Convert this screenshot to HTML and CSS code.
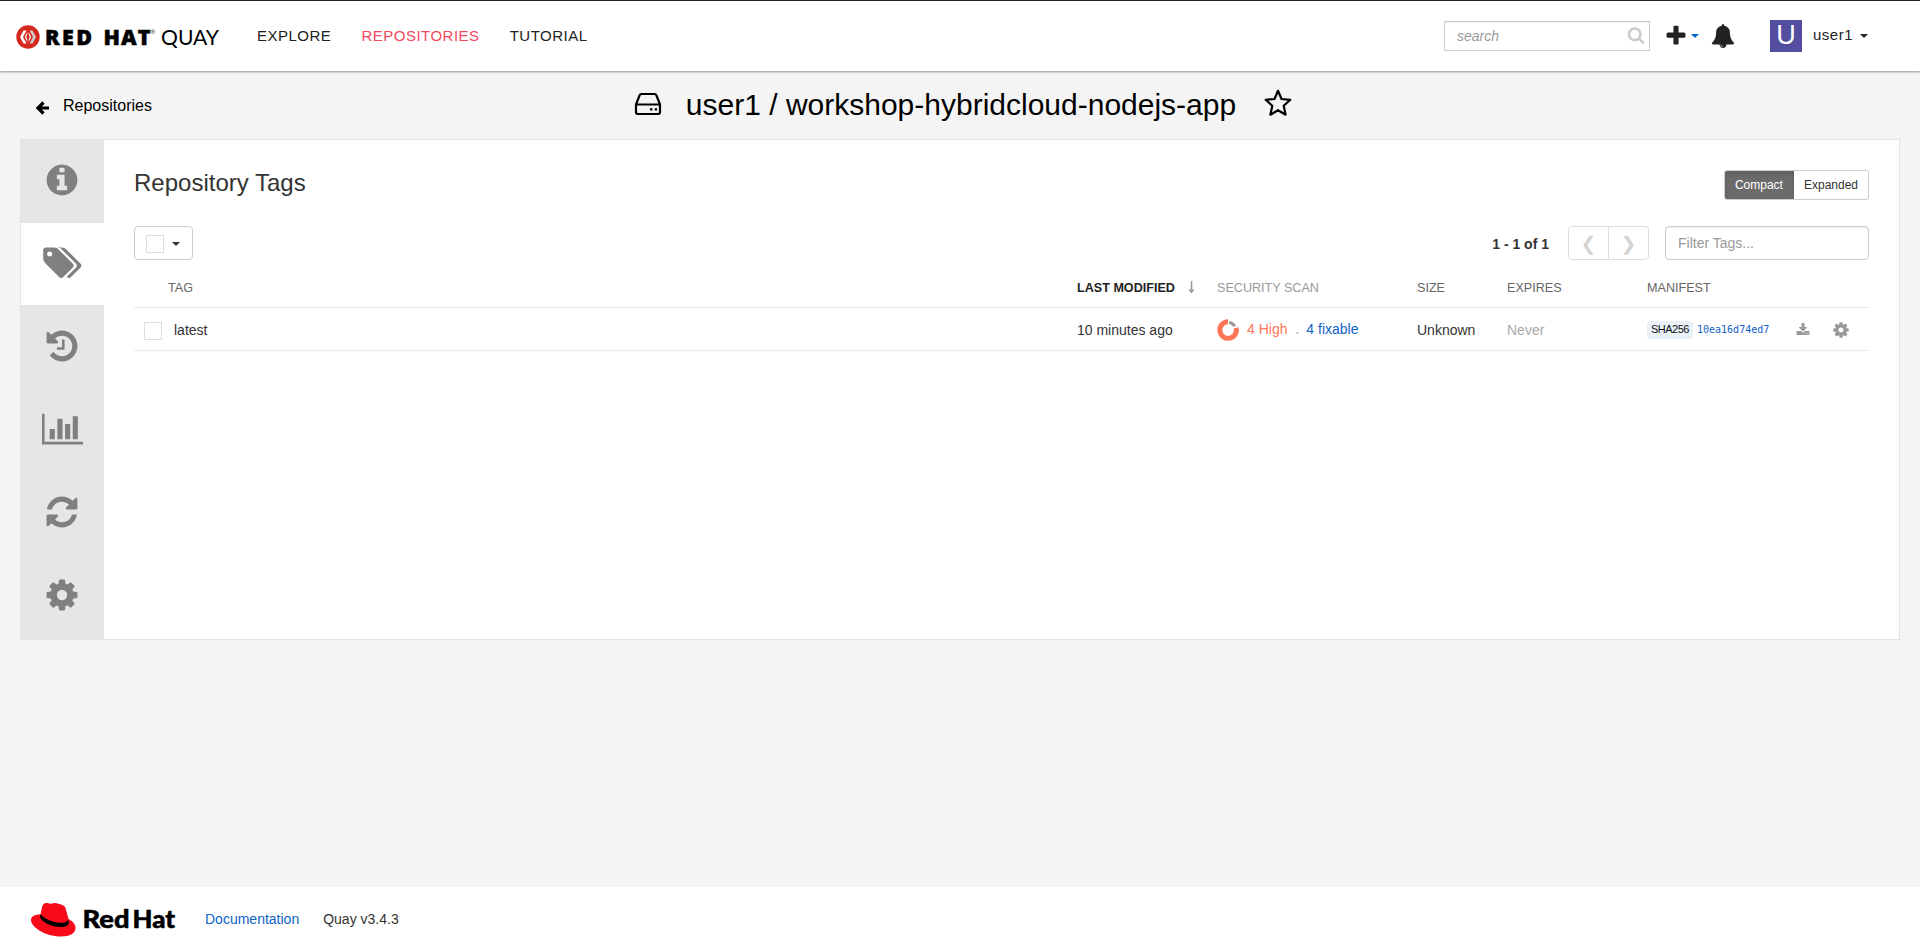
FILE: index.html
```html
<!DOCTYPE html>
<html lang="en">
<head>
<meta charset="utf-8">
<title>user1/workshop-hybridcloud-nodejs-app · Quay</title>
<link rel="stylesheet" href="styles.css">
</head>
<body>
<svg class="defs" width="0" height="0">
  <symbol id="cog" viewBox="0 0 1792 1792"><path d="M1152 896q0-106-75-181t-181-75-181 75-75 181 75 181 181 75 181-75 75-181zm512-109v222q0 12-8 23t-20 13l-185 28q-19 54-39 91 35 50 107 138 10 12 10 25t-9 23q-27 37-99 108t-94 71q-12 0-26-9l-138-108q-44 23-91 38-16 136-29 186-7 28-36 28h-222q-14 0-24.5-8.5t-11.5-21.5l-28-184q-49-16-90-37l-141 107q-10 9-25 9-14 0-25-11-126-114-165-168-7-10-7-23 0-12 8-23 15-21 51-66.5t54-70.5q-27-50-41-99l-183-27q-13-2-21-12.5t-8-23.5v-222q0-12 8-23t19-13l186-28q14-46 39-92-40-57-107-138-10-12-10-24 0-10 9-23 26-36 98.5-107.5t94.5-71.5q13 0 26 10l138 107q44-23 91-38 16-136 29-186 7-28 36-28h222q14 0 24.5 8.5t11.5 21.5l28 184q49 16 90 37l142-107q9-9 24-9 13 0 25 10 129 119 165 170 7 8 7 22 0 12-8 23-15 21-51 66.5t-54 70.5q26 50 41 98l183 28q13 2 21 12.5t8 23.5z"/></symbol>
</svg>
<header class="topbar">
  <svg class="logo" width="206" height="28" viewBox="0 0 206 28">
    <circle cx="12" cy="14" r="11.7" fill="#d7281d"/>
    <path d="M7.500 7.500h3L7 14l3.500 6.500h-3L4 14z" fill="#fff"/>
    <path d="M13.500 7.500h3L20 14l-3.500 6.500h-3L17 14z" fill="#ccc"/>
    <path d="M11.300 9l-2.600 5 2.600 5V16.500L10.300 14l1-2.500zM12.700 9l2.600 5-2.600 5V16.500l1-2.500-1-2.500z" fill="#eee"/>
    <text class="logo-bold" x="29" y="21.700" textLength="47" lengthAdjust="spacing">RED</text>
    <text class="logo-bold" x="87.500" y="21.700" textLength="47" lengthAdjust="spacing">HAT</text>
    <text class="logo-reg" x="134.500" y="11">®</text>
    <text class="logo-light" x="145" y="21.700" textLength="58" lengthAdjust="spacingAndGlyphs">QUAY</text>
  </svg>
  <nav class="nav"><a>EXPLORE</a><a class="current">REPOSITORIES</a><a>TUTORIAL</a></nav>
  <div class="search"><span>search</span>
    <svg width="18" height="18" viewBox="0 0 1792 1792"><path d="M1216 832q0-185-131.500-316.500t-316.500-131.500-316.500 131.500-131.500 316.500 131.500 316.500 316.500 131.500 316.500-131.500 131.500-316.500zm512 832q0 52-38 90t-90 38q-54 0-90-38l-343-342q-179 124-399 124-143 0-273.500-55.500t-225-150-150-225-55.500-273.500 55.500-273.500 150-225 225-150 273.500-55.500 273.500 55.500 225 150 150 225 55.500 273.500q0 220-124 399l343 343q37 37 37 90z"/></svg>
  </div>
  <svg class="plus" width="24" height="24" viewBox="0 0 1792 1792"><path d="M1600 736v192q0 40-28 68t-68 28h-416v416q0 40-28 68t-68 28h-192q-40 0-68-28t-28-68v-416h-416q-40 0-68-28t-28-68v-192q0-40 28-68t68-28h416v-416q0-40 28-68t68-28h192q40 0 68 28t28 68v416h416q40 0 68 28t28 68z"/></svg>
  <i class="caret blue"></i>
  <svg class="bell" width="24" height="24" viewBox="0 0 1792 1792"><path d="M912 1696q0-16-16-16-59 0-101.500-42.500t-42.500-101.500q0-16-16-16t-16 16q0 73 51.500 124.500t124.500 51.500q16 0 16-16zm816-288q0 52-38 90t-90 38h-448q0 106-75 181t-181 75-181-75-75-181h-448q-52 0-90-38t-38-90q50-42 91-88t85-119.500 74.500-158.500 50-206 19.500-260q0-152 117-282.500t307-158.500q-8-19-8-39 0-40 28-68t68-28 68 28 28 68q0 20-8 39 190 28 307 158.500t117 282.500q0 139 19.500 260t50 206 74.500 158.500 85 119.500 91 88z"/></svg>
  <span class="avatar">U</span>
  <span class="user">user1</span>
  <i class="caret"></i>
</header>

<div class="heading">
  <a class="back"><svg width="14" height="14" viewBox="0 0 14 14"><path d="M8.500 1.500L3 7l5.500 5.500M3 7h11" fill="none" stroke="#000" stroke-width="3.200"/></svg>Repositories</a>
  <div class="repo-title">
    <svg width="28" height="24" viewBox="0 0 28 24" fill="none" stroke="#000" stroke-width="2.200" stroke-linejoin="round"><path d="M2 12.500L5.500 3.500Q6 2 7.500 2h13q1.500 0 2 1.500L26 12.500V20q0 2-2 2H4q-2 0-2-2zM2 12.500h24"/><path d="M16 17.300h2.400M20.700 17.300h2.400" stroke-linejoin="miter"/></svg>
    <h1>user1 / workshop-hybridcloud-nodejs-app</h1>
    <svg class="star" width="28" height="28" viewBox="0 0 28 28"><path d="M14 1.800l3.500 8.200 8.800.8-6.600 6 1.900 8.900L14 21.200l-7.600 4.500 1.900-8.900-6.600-6 8.800-.8z" fill="none" stroke="#000" stroke-width="2.200" stroke-linejoin="round"/></svg>
  </div>
</div>

<main class="panel">
  <aside class="tabs">
    <a><svg width="36" height="36" viewBox="0 0 1792 1792"><path d="M1152 1376v-160q0-14-9-23t-23-9h-96v-512q0-14-9-23t-23-9h-320q-14 0-23 9t-9 23v160q0 14 9 23t23 9h96v320h-96q-14 0-23 9t-9 23v160q0 14 9 23t23 9h448q14 0 23-9t9-23zm-128-896v-160q0-14-9-23t-23-9h-192q-14 0-23 9t-9 23v160q0 14 9 23t23 9h192q14 0 23-9t9-23zm640 416q0 209-103 385.500t-279.500 279.500-385.500 103-385.500-103-279.500-279.500-103-385.500 103-385.500 279.500-279.500 385.500-103 385.500 103 279.500 279.500 103 385.500z"/></svg></a>
    <a class="active"><svg width="39" height="36" viewBox="-64 0 1920 1792"><path d="M384 448q0-53-37.500-90.500t-90.500-37.500-90.500 37.500-37.500 90.500 37.500 90.500 90.500 37.500 90.500-37.500 37.500-90.500zm1067 576q0 53-37 90l-491 492q-39 37-91 37-53 0-90-37l-715-716q-38-37-64.500-101t-26.500-117v-416q0-52 38-90t90-38h416q53 0 117 26.500t102 64.500l715 714q37 39 37 91zm384 0q0 53-37 90l-491 492q-39 37-91 37-36 0-59-14t-53-45l470-470q37-37 37-90 0-52-37-91l-715-714q-38-38-102-64.500t-117-26.500h224q53 0 117 26.500t102 64.500l715 714q37 39 37 91z"/></svg></a>
    <a><svg width="36" height="36" viewBox="0 0 1792 1792"><path d="M1664 896q0 156-61 298t-164 245-245 164-298 61q-172 0-327-72.500t-264-204.500q-7-10-6.500-22.500t8.500-20.500l137-138q10-9 25-9 16 2 23 12 73 95 179 147t225 52q104 0 198.500-40.500t163.500-109.500 109.500-163.500 40.500-198.500-40.500-198.500-109.500-163.500-163.500-109.500-198.500-40.500q-98 0-188 35.500t-160 101.500l137 138q31 30 14 69-17 40-59 40h-448q-26 0-45-19t-19-45v-448q0-42 40-59 39-17 69 14l130 129q107-101 244.500-156.500t284.500-55.500q156 0 298 61t245 164 164 245 61 298zm-640-288v448q0 14-9 23t-23 9h-320q-14 0-23-9t-9-23v-64q0-14 9-23t23-9h224v-352q0-14 9-23t23-9h64q14 0 23 9t9 23z"/></svg></a>
    <a><svg width="41" height="36" viewBox="0 0 2048 1792"><path d="M640 896v512h-256v-512h256zm384-512v1024h-256v-1024h256zm1024 1152v128h-2048v-1536h128v1408h1920zm-640-896v768h-256v-768h256zm384-384v1152h-256v-1152h256z"/></svg></a>
    <a><svg width="36" height="36" viewBox="0 0 1792 1792"><path d="M1639 1056q0 5-1 7-64 268-268 434.500t-478 166.500q-146 0-282.500-55t-243.500-157l-129 129q-19 19-45 19t-45-19-19-45v-448q0-26 19-45t45-19h448q26 0 45 19t19 45-19 45l-137 137q71 66 161 102t187 36q134 0 250-65t186-179q11-17 53-117 8-23 30-23h192q13 0 22.500 9.500t9.500 22.500zm25-800v448q0 26-19 45t-45 19h-448q-26 0-45-19t-19-45 19-45l138-138q-148-137-349-137-134 0-250 65t-186 179q-11 17-53 117-8 23-30 23h-199q-13 0-22.500-9.500t-9.500-22.500v-7q65-268 270-434.500t480-166.500q146 0 284 55.500t245 156.500l130-129q19-19 45-19t45 19 19 45z"/></svg></a>
    <a><svg width="36" height="36"><use href="#cog"/></svg></a>
  </aside>
  <section class="content">
    <div class="title-row">
      <h2>Repository Tags</h2>
      <div class="toggle"><span class="on">Compact</span><span>Expanded</span></div>
    </div>
    <div class="toolbar">
      <div class="check-menu"><i class="box"></i><i class="caret"></i></div>
      <b class="count">1 - 1 of 1</b>
      <div class="pager"><span>❮</span><span>❯</span></div>
      <div class="filter">Filter Tags...</div>
    </div>
    <div class="row head">
      <span class="tag-head">TAG</span>
      <span class="sorted">LAST MODIFIED<svg width="7" height="13" viewBox="0 0 7 13"><path d="M2.800 0h1.500v8.500H6.500L3.500 12.500.500 8.500h2.300z" fill="#999"/></svg></span>
      <span class="muted">SECURITY SCAN</span><span>SIZE</span><span>EXPIRES</span><span>MANIFEST</span><span></span><span></span>
    </div>
    <div class="row body">
      <span class="tag-cell"><i class="box"></i>latest</span>
      <span>10 minutes ago</span>
      <span class="scan"><svg width="22" height="22" viewBox="0 0 22 22" fill="none" stroke-width="5"><path d="M19.100 8.800A8.300 8.300 0 1 1 11 2.700" stroke="#ff7558"/><path d="M12.200 3.500A7.600 7.600 0 0 1 17.800 7.300" stroke="#999" stroke-width="2.800"/></svg><em class="high">4 High</em><em class="dot">.</em><a>4 fixable</a></span>
      <span>Unknown</span><span class="never">Never</span>
      <span class="manifest"><em class="sha">SHA256</em><a>10ea16d74ed7</a></span>
      <span class="icon"><svg width="14" height="14" viewBox="0 0 1792 1792"><path d="M1344 1344q0-26-19-45t-45-19-45 19-19 45 19 45 45 19 45-19 19-45zm256 0q0-26-19-45t-45-19-45 19-19 45 19 45 45 19 45-19 19-45zm128-224v320q0 40-28 68t-68 28h-1472q-40 0-68-28t-28-68v-320q0-40 28-68t68-28h465l135 136q58 56 136 56t136-56l136-136h464q40 0 68 28t28 68zm-325-569q17 41-14 70l-448 448q-18 19-45 19t-45-19l-448-448q-31-29-14-70 17-39 59-39h256v-448q0-26 19-45t45-19h256q26 0 45 19t19 45v448h256q42 0 59 39z"/></svg></span>
      <span class="icon"><svg width="18" height="18"><use href="#cog"/></svg></span>
    </div>
  </section>
</main>

<footer class="footer">
  <svg class="redhat" width="146" height="36" viewBox="0 0 146 36">
    <path d="M10.500 12.500C5 12.300 1 14.500 1 18c0 7 14 16.500 30 16.500 9 0 14.500-3.500 14.500-8.500 0-4-3-7-7-9L35.500 6C35 3.500 30 1.500 24.500 1c-2-.2-2.500.8-4 .8S17 .800 15 1.200c-1.500.300-2.500 2-3 4z" fill="#f80a1a"/>
    <path d="M10.500 12.200c-.8 2-.6 3.600 1 5.300 3.500 4 11 7.500 19.500 7.500 5 0 8-1.500 7.800-4.500l-.6-3c-1 2.500-4 3.600-8 3.300-7-.5-15.500-3.500-19.700-8.600z" fill="#000"/>
    <text class="redhat-text" x="52.500" y="26.400" textLength="47" lengthAdjust="spacingAndGlyphs">Red</text>
    <text class="redhat-text" x="102.500" y="26.400" textLength="42.500" lengthAdjust="spacingAndGlyphs">Hat</text>
  </svg>
  <a>Documentation</a>
  <span>Quay v3.4.3</span>
</footer>
</body>
</html>
```
FILE: styles.css
```css
* { box-sizing: border-box; }
body {
  margin: 0;
  min-height: 951px;
  display: flex;
  flex-direction: column;
  background: #f4f4f4;
  color: #333;
  font: 14px/20px "Liberation Sans", Arial, sans-serif;
}
.defs { position: absolute; }
h1, h2 { margin: 0; font-weight: 400; }
em { font-style: normal; }
svg { display: block; flex: none; overflow: visible; }
.topbar {
  height: 71px;
  border-top: 1px solid #222;
  background: #fff;
  box-shadow: 0 1px 2px rgba(0, 0, 0, .4);
  display: flex;
  align-items: center;
  padding: 0 52px 0 16px;
  color: #222;
  position: relative;
}
.logo { margin-top: 1px; }
.logo-bold { font: 800 21.500px "Open Sans", sans-serif; stroke: #000; stroke-width: .5px; }
.logo-light { font: 400 21.500px Lato, sans-serif; }
.logo-reg { font: 6px "Liberation Sans", sans-serif; }
.nav { display: flex; gap: 30px; margin-left: 35px; font-size: 15px; letter-spacing: .5px; }
.nav .current { color: #f4475d; }
.search {
  margin: 0 -1px 0 auto;
  width: 206px;
  height: 30px;
  border: 1px solid #ccc;
  box-shadow: inset 0 1px 1px rgba(0, 0, 0, .075);
  display: flex;
  justify-content: space-between;
  align-items: center;
  padding: 0 4px 0 12px;
  color: #999;
  font-style: italic;
}
.search svg { fill: #ccc; margin-bottom: 2px; }
.plus { margin: 0 3px 1px 15px; fill: #222; }
.caret { width: 8px; height: 4px; background: currentColor; clip-path: polygon(0 0, 100% 0, 50% 100%); }
.blue { color: #0066cc; }
.bell { margin: 0 35px 1px 12px; fill: #222; }
.avatar {
  width: 32px;
  height: 32px;
  background: #534ea0;
  color: #fff;
  font: 27px/31px "Liberation Sans", sans-serif;
  text-align: center;
}
.user { margin: 0 7px 2px 11px; font-size: 15px; letter-spacing: .5px; }
.heading { height: 68px; display: grid; grid-template-columns: 1fr auto 1fr; align-items: center; color: #000; }
.back { display: flex; align-items: center; gap: 14px; padding: 2px 0 0 35px; font-size: 16px; }
.back svg { margin-top: 4px; }
.repo-title { display: flex; align-items: center; gap: 24px; padding-left: 6px; }
.repo-title > svg:first-child { margin-bottom: 2px; }
h1 { font-size: 30px; line-height: 40px; }
.star { margin: 0 0 4px 4px; }
.panel { margin: 0 20px; height: 501px; border: 1px solid #e2e2e2; background: #fff; display: flex; }
.tabs { width: 83px; height: 499px; display: flex; flex-direction: column; }
.tabs a {
  height: 83px;
  display: flex;
  align-items: center;
  justify-content: center;
  padding-bottom: 2px;
  background: #e6e6e6;
  border: solid #dde4ea;
  border-width: 0 1px 1px 0;
  fill: #808080;
}
.tabs a:last-child { height: 84px; padding-bottom: 4px; border-bottom: 0; }
.tabs .active { background: #fff; border-right-color: #fff; }
.content { flex: 1; padding: 30px 30px 0 30px; }
.title-row, .toolbar { display: flex; justify-content: space-between; align-items: flex-start; }
h2 { font-size: 24px; line-height: 26px; }
.toggle { display: flex; border: 1px solid #ccc; border-radius: 3px; font-size: 12px; line-height: 28px; overflow: hidden; }
.toggle span { padding: 0 10px; }
.toggle .on { background: #6b6b6b; color: #fff; box-shadow: inset 0 3px 5px rgba(0, 0, 0, .125); padding: 0 11px 0 10px; }
.toolbar { margin-top: 26px; height: 34px; align-items: center; }
.check-menu { width: 59px; height: 34px; border: 1px solid #ccc; border-radius: 4px; display: flex; align-items: center; gap: 8px; padding-left: 11px; margin-right: auto; }
.box { width: 18px; height: 18px; border: 1px solid #ddd; background: #fff; }
.check-menu .box { margin-top: 2px; }
.check-menu .caret { margin-top: 2px; }
.count { margin: 2px 19px 0 0; }
.pager { display: flex; width: 81px; height: 34px; border: 1px solid #ddd; border-radius: 4px; margin-right: 16px; color: #d4d4d4; font: 19px/32px "DejaVu Sans", sans-serif; }
.pager span { flex: 1; text-align: center; }
.pager span + span { border-left: 1px solid #ddd; }
.filter { width: 204px; height: 34px; border: 1px solid #ccc; border-radius: 4px; box-shadow: inset 0 1px 1px rgba(0, 0, 0, .075); padding: 6px 12px; color: #999; }
.row { display: grid; grid-template-columns: 1fr 140px 200px 90px 140px 149px 36px 37px; align-items: center; border-bottom: 1px solid #eaeaea; }
.head { height: 48px; padding-top: 8px; font-size: 12.6px; color: #666; }
.tag-head { padding-left: 34px; }
.sorted { font-weight: 700; color: #222; display: flex; align-items: center; gap: 13px; }
.muted { color: #999; }
.body { height: 43px; padding-top: 1px; }
.tag-cell { display: flex; align-items: center; gap: 12px; padding-left: 10px; }
.tag-cell .box { margin-top: 3px; }
.scan { display: flex; align-items: center; }
.high { color: #ff7558; margin-left: 8px; }
.dot { margin: 0 7px 0 8px; color: #999; }
.scan em, .scan a { padding-bottom: 2px; }
a { color: inherit; }
.scan a, .manifest a, .footer a { color: #0f62c4; }
.never { color: #aaa; }
.manifest { display: flex; align-items: center; gap: 4px; }
.sha { width: 46px; height: 18px; border-radius: 4px; background: #e8f1f6; color: #111; font-size: 11px; line-height: 17px; letter-spacing: -.5px; text-align: center; }
.manifest a { font: 10px "DejaVu Sans Mono", monospace; }
.icon { fill: #999; }
.footer { margin-top: auto; height: 64px; background: #fff; display: flex; align-items: center; padding-left: 30px; }
.redhat { margin: 2px 29px 0 0; }
.redhat-text { font: 900 24.500px Lato, sans-serif; stroke: #000; stroke-width: .5px; }
.footer span { margin-left: 24px; }
```
